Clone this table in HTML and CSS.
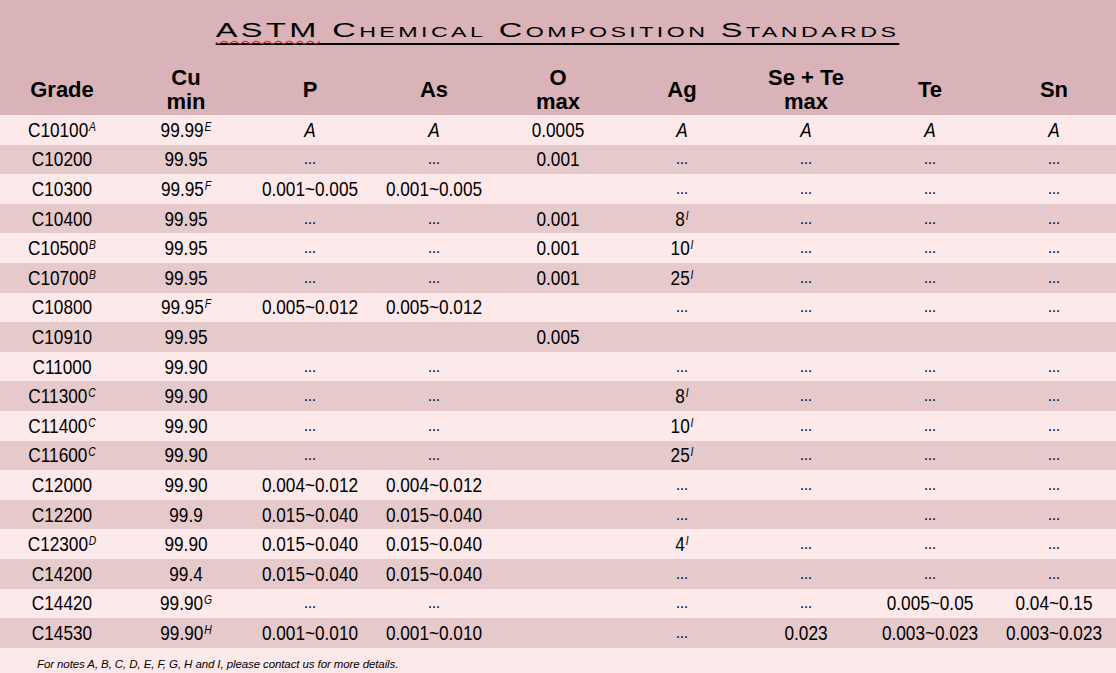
FILE: index.html
```html
<!DOCTYPE html>
<html lang="en">
<head>
<meta charset="utf-8">
<title>ASTM Chemical Composition Standards</title>
<link rel="stylesheet" href="styles.css">
</head>
<body>
<div class="sheet">
  <div class="title-bar">
    <h1 class="title"><span class="spell">ASTM</span> Chemical Composition Standards</h1>
  </div>
  <table class="grid">
    <colgroup>
      <col><col><col><col><col><col><col><col><col>
    </colgroup>
    <thead>
      <tr>
        <th>Grade</th>
        <th>Cu<br>min</th>
        <th>P</th>
        <th>As</th>
        <th>O<br>max</th>
        <th>Ag</th>
        <th>Se + Te<br>max</th>
        <th>Te</th>
        <th>Sn</th>
      </tr>
    </thead>
    <tbody>
      <tr><td>C10100<sup>A</sup></td><td>99.99<sup>E</sup></td><td><i>A</i></td><td><i>A</i></td><td>0.0005</td><td><i>A</i></td><td><i>A</i></td><td><i>A</i></td><td><i>A</i></td></tr>
      <tr><td>C10200</td><td>99.95</td><td class="dots">...</td><td class="dots">...</td><td>0.001</td><td class="dots">...</td><td class="dots">...</td><td class="dots">...</td><td class="dots">...</td></tr>
      <tr><td>C10300</td><td>99.95<sup>F</sup></td><td>0.001~0.005</td><td>0.001~0.005</td><td></td><td class="dots">...</td><td class="dots">...</td><td class="dots">...</td><td class="dots">...</td></tr>
      <tr><td>C10400</td><td>99.95</td><td class="dots">...</td><td class="dots">...</td><td>0.001</td><td>8<sup>I</sup></td><td class="dots">...</td><td class="dots">...</td><td class="dots">...</td></tr>
      <tr><td>C10500<sup>B</sup></td><td>99.95</td><td class="dots">...</td><td class="dots">...</td><td>0.001</td><td>10<sup>I</sup></td><td class="dots">...</td><td class="dots">...</td><td class="dots">...</td></tr>
      <tr><td>C10700<sup>B</sup></td><td>99.95</td><td class="dots">...</td><td class="dots">...</td><td>0.001</td><td>25<sup>I</sup></td><td class="dots">...</td><td class="dots">...</td><td class="dots">...</td></tr>
      <tr><td>C10800</td><td>99.95<sup>F</sup></td><td>0.005~0.012</td><td>0.005~0.012</td><td></td><td class="dots">...</td><td class="dots">...</td><td class="dots">...</td><td class="dots">...</td></tr>
      <tr><td>C10910</td><td>99.95</td><td></td><td></td><td>0.005</td><td></td><td></td><td></td><td></td></tr>
      <tr><td>C11000</td><td>99.90</td><td class="dots">...</td><td class="dots">...</td><td></td><td class="dots">...</td><td class="dots">...</td><td class="dots">...</td><td class="dots">...</td></tr>
      <tr><td>C11300<sup>C</sup></td><td>99.90</td><td class="dots">...</td><td class="dots">...</td><td></td><td>8<sup>I</sup></td><td class="dots">...</td><td class="dots">...</td><td class="dots">...</td></tr>
      <tr><td>C11400<sup>C</sup></td><td>99.90</td><td class="dots">...</td><td class="dots">...</td><td></td><td>10<sup>I</sup></td><td class="dots">...</td><td class="dots">...</td><td class="dots">...</td></tr>
      <tr><td>C11600<sup>C</sup></td><td>99.90</td><td class="dots">...</td><td class="dots">...</td><td></td><td>25<sup>I</sup></td><td class="dots">...</td><td class="dots">...</td><td class="dots">...</td></tr>
      <tr><td>C12000</td><td>99.90</td><td>0.004~0.012</td><td>0.004~0.012</td><td></td><td class="dots">...</td><td class="dots">...</td><td class="dots">...</td><td class="dots">...</td></tr>
      <tr><td>C12200</td><td>99.9</td><td>0.015~0.040</td><td>0.015~0.040</td><td></td><td class="dots">...</td><td></td><td class="dots">...</td><td class="dots">...</td></tr>
      <tr><td>C12300<sup>D</sup></td><td>99.90</td><td>0.015~0.040</td><td>0.015~0.040</td><td></td><td>4<sup>I</sup></td><td class="dots">...</td><td class="dots">...</td><td class="dots">...</td></tr>
      <tr><td>C14200</td><td>99.4</td><td>0.015~0.040</td><td>0.015~0.040</td><td></td><td class="dots">...</td><td class="dots">...</td><td class="dots">...</td><td class="dots">...</td></tr>
      <tr><td>C14420</td><td>99.90<sup>G</sup></td><td class="dots">...</td><td class="dots">...</td><td></td><td class="dots">...</td><td class="dots">...</td><td>0.005~0.05</td><td>0.04~0.15</td></tr>
      <tr><td>C14530</td><td>99.90<sup>H</sup></td><td>0.001~0.010</td><td>0.001~0.010</td><td></td><td class="dots">...</td><td>0.023</td><td>0.003~0.023</td><td>0.003~0.023</td></tr>
    </tbody>
  </table>
  <p class="note">For notes A, B, C, D, E, F, G, H and I, please contact us for more details.</p>
</div>
</body>
</html>
```

FILE: styles.css
```css
html, body {
  margin: 0;
  padding: 0;
  background: #fde9e9;
}

.sheet {
  width: 1116px;
  height: 673px;
  overflow: hidden;
  background: #fde9e9;
  color: #000;
  font-family: "Liberation Sans", Arial, sans-serif;
}

.title-bar {
  background: #d9b3b7;
  height: 60px;
  box-sizing: border-box;
  padding-top: 19px;
  display: flex;
  justify-content: center;
  align-items: flex-start;
}

.title {
  margin: 0;
  font-family: "Liberation Sans", Arial, sans-serif;
  font-weight: normal;
  font-size: 21px;
  line-height: 22px;
  font-variant: small-caps;
  letter-spacing: 2.2px;
  display: inline-block;
  border-bottom: 2px solid #000;
  padding-bottom: 2px;
  transform: scaleX(1.55);
  transform-origin: center;
  white-space: nowrap;
}

.spell {
  text-decoration: underline wavy #e02020;
  text-decoration-thickness: 1px;
  text-underline-offset: 3px;
}

.grid {
  width: 1116px;
  border-collapse: collapse;
  table-layout: fixed;
}

.grid col {
  width: 124px;
}

.grid th {
  background: #d9b3b7;
  height: 55px;
  box-sizing: border-box;
  padding: 5px 0 0;
  font-size: 22px;
  line-height: 24px;
  font-weight: bold;
  text-align: center;
  vertical-align: middle;
}

.grid tbody tr:nth-child(even) {
  background: #e6c9cb;
}

.grid tbody tr:nth-child(odd) {
  background: #fde9e9;
}

.grid td {
  height: 29.6px;
  padding: 0;
  box-sizing: border-box;
  text-align: center;
  vertical-align: middle;
  font-size: 20px;
  line-height: 22px;
  white-space: nowrap;
  transform: scaleX(0.86);
  transform-origin: center;
}

.grid td i {
  font-size: 20px;
}

.grid td.dots {
  font-size: 17px;
}

.grid sup {
  font-size: 12px;
  font-style: italic;
  line-height: 0;
  vertical-align: 6px;
  margin-left: 1px;
}

.note {
  margin: 0;
  padding: 9px 0 0 37px;
  font-size: 11.5px;
  line-height: 14px;
  font-style: italic;
  letter-spacing: -0.1px;
}
```
